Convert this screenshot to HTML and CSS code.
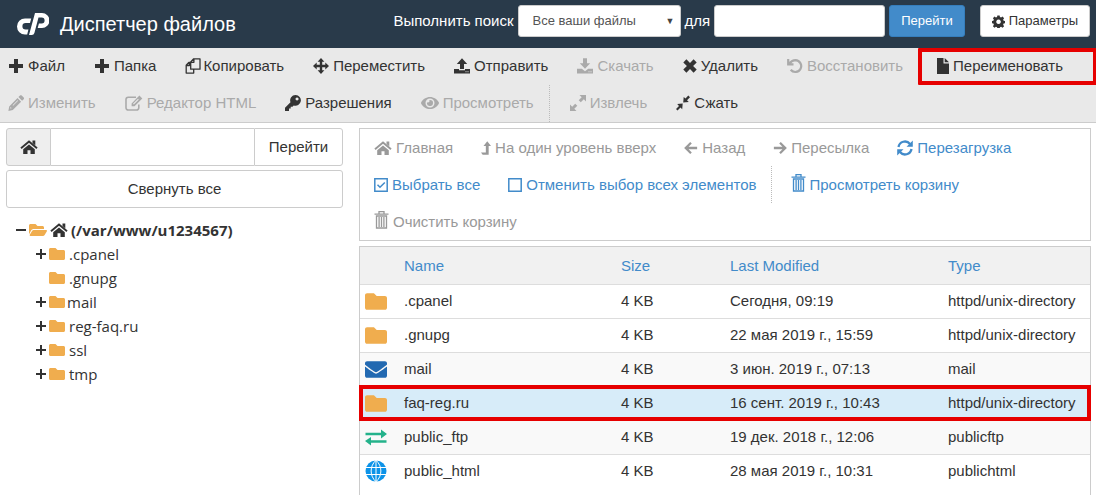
FILE: index.html
```html
<!DOCTYPE html>
<html lang="ru">
<head>
<meta charset="utf-8">
<meta name="viewport" content="width=device-width, initial-scale=1">
<title>Диспетчер файлов</title>
<link rel="stylesheet" href="styles.css">
</head>
<body>
<svg class="sprite" aria-hidden="true">
  <symbol id="plus" viewBox="0 0 16 16"><path d="M6 1h4v5h5v4h-5v5H6v-5H1V6h5z"/></symbol>
  <symbol id="copy" viewBox="0 0 16 16"><path d="M5.700 4 8.700.8h6.300v10.400H5.700zM5.700 4.300h3.200V.8M5.500 4.500H3.800L1.200 7.300v7.800h7.500v-3.600M1.200 7.500h3.200V4.700" fill="none" stroke="currentColor" stroke-width="1.300" stroke-linejoin="round"/></symbol>
  <symbol id="move" viewBox="0 0 16 16"><path d="M8 0l3.400 3.700H9.200v3.100h3.100V4.600L16 8l-3.700 3.400V9.200H9.200v3.100h2.200L8 16l-3.400-3.700h2.200V9.200H3.700v2.200L0 8l3.700-3.400v2.200h3.100V3.700H4.600z"/></symbol>
  <symbol id="upload" viewBox="0 0 16 16"><path d="M8 .2 13.200 6H10v5H6V6H2.800zM0 11h5v1.300h6V11h5v4.500H0zm11.500 2.200v1h1v-1zm2 0v1h1v-1z" fill-rule="evenodd"/></symbol>
  <symbol id="download" viewBox="0 0 16 16"><path d="M6 .2h4v5h3.200L8 10.800 2.800 5.200H6zM0 10.800h4.800L8 13.300l3.200-2.500H16v4.700H0zm11.500 2.400v1h1v-1zm2 0v1h1v-1z" fill-rule="evenodd"/></symbol>
  <symbol id="cross" viewBox="0 0 14 14"><path d="M3.400.3 7 3.900 10.600.3l3.100 3.100L10.100 7l3.600 3.600-3.100 3.100L7 10.100l-3.600 3.600-3.100-3.100L3.900 7 .3 3.400z"/></symbol>
  <symbol id="undo" viewBox="0 0 16 16"><path d="M1.200 1v5.300h5.300M2.200 5.800C4 3.500 6 2.200 8.500 2.200a5.900 5.900 0 1 1-4.800 9.600" fill="none" stroke="currentColor" stroke-width="2.200"/></symbol>
  <symbol id="file" viewBox="0 0 12 16"><path d="M0 0h6.500v5.500H12V16H0zM7.700 0 12 4.300H7.700z"/></symbol>
  <symbol id="pencil" viewBox="0 0 16 16"><path d="M12 .5c.6-.5 1.200-.4 1.700 0l2 2c.5.600.400 1.200 0 1.700l-1.600 1.600-3.700-3.700zM9.500 3.100l3.600 3.600-8.300 8.300-4.400.9.800-4.500zM2.600 12l-.5 1.600 1.600-.4zM9.600 5.200l-5 5 .5.500 5-5z" fill-rule="evenodd"/></symbol>
  <symbol id="edit" viewBox="0 0 18 16"><path d="M11 2.200H3.200A2.200 2.200 0 0 0 1 4.400v8.400A2.200 2.200 0 0 0 3.200 15h8.400a2.200 2.200 0 0 0 2.200-2.200V9.500" fill="none" stroke="currentColor" stroke-width="1.600"/><path d="M14.400.6 17.300 3.500 9.500 11.300H6.600V8.400zM13 3.800 8 8.800l.8.800 5-5z" fill-rule="evenodd"/></symbol>
  <symbol id="key" viewBox="0 0 16 16"><path d="M10.600 0a5.400 5.400 0 1 1-1.900 10.500L7.500 11.700H5.700v1.800H4V16H0v-3.200l5.500-5.500A5.400 5.400 0 0 1 10.600 0zm1.400 2.500a1.500 1.500 0 1 0 .1 0z" fill-rule="evenodd"/></symbol>
  <symbol id="eye" viewBox="0 0 576 512"><path d="M572.520 241.400C518.290 135.590 410.930 64 288 64S57.680 135.640 3.480 241.410a32.350 32.350 0 0 0 0 29.190C57.710 376.410 165.070 448 288 448s230.320-71.640 284.520-177.410a32.350 32.350 0 0 0 0-29.190zM288 400a144 144 0 1 1 144-144 143.930 143.930 0 0 1-144 144zm0-240a95.310 95.310 0 0 0-25.310 3.790 47.850 47.850 0 0 1-66.900 66.900A95.780 95.780 0 1 0 288 160z"/></symbol>
  <symbol id="expand" viewBox="0 0 16 16"><path d="M9.500 0H16v6.500l-2.200-2.200-3 3-2.100-2.100 3-3zM0 9.500l2.200 2.200 3-3 2.100 2.100-3 3L6.500 16H0z"/></symbol>
  <symbol id="compress" viewBox="0 0 14 16"><path d="M12.300.5 14 2.200l-3 3 1.800 1.800-5.600.5.500-5.600 1.800 1.600zM6.700 8.500l-.5 5.700-1.700-1.700-3 3L0 13.900l3-3L1.200 9.100z"/></symbol>
  <symbol id="gear" viewBox="0 0 16 16"><path d="M6.600.5h2.800l.4 2 1.400.6 1.700-1.200 2 2-1.200 1.700.6 1.400 2 .4v2.800l-2 .4-.6 1.400 1.200 1.700-2 2-1.700-1.200-1.400.6-.4 2H6.600l-.4-2-1.400-.6-1.700 1.200-2-2L2.300 12l-.6-1.400-2-.4V7.400l2-.4.600-1.400L1.100 3.900l2-2 1.700 1.200 1.400-.6zM8 5.600a2.800 2.800 0 1 0 .1 0z" fill-rule="evenodd"/></symbol>
  <symbol id="home" viewBox="0 0 18 16"><path d="M12.500 1.500h2.800v5l-2.800-2.500zM9 5.500l5.800 4.800V15h-4.300v-3.800h-3V15H3.200v-4.700z"/><path d="M1 9.300 9 2.500l8 6.800" fill="none" stroke="currentColor" stroke-width="1.900"/></symbol>
  <symbol id="levelup" viewBox="0 0 12 16"><path d="M7.500 0 12 5.500H9.200V16H2L0 13.300h5.800V5.500H3z"/></symbol>
  <symbol id="left" viewBox="0 0 16 16"><path d="M8 2 2 8l6 6M2.300 8H15" fill="none" stroke="currentColor" stroke-width="2.600"/></symbol>
  <symbol id="right" viewBox="0 0 16 16"><path d="M8 2l6 6-6 6M13.700 8H1" fill="none" stroke="currentColor" stroke-width="2.600"/></symbol>
  <symbol id="refresh" viewBox="0 0 16 16"><path d="M1.500 7A6.500 6.500 0 0 1 13 4M14.500 9A6.500 6.500 0 0 1 3 12" fill="none" stroke="currentColor" stroke-width="2.300"/><path d="M15.800.5v6.300H9.500zM.2 15.500V9.200h6.300z"/></symbol>
  <symbol id="checked" viewBox="0 0 14 14"><path d="M.8.8h12.400v12.400H.8zM3.500 6.800 6 9.300l4.800-4.800" fill="none" stroke="currentColor" stroke-width="1.500"/></symbol>
  <symbol id="unchecked" viewBox="0 0 14 14"><path d="M.8.8h12.400v12.400H.8z" fill="none" stroke="currentColor" stroke-width="1.500"/></symbol>
  <symbol id="trash" viewBox="0 0 14 18"><path d="M4.500 2.500V.7h5v1.800M0 3.200h14M2 5h10v12H2zM4.600 6v10M7 6v10M9.400 6v10" fill="none" stroke="currentColor" stroke-width="1.300"/></symbol>
  <symbol id="folder" viewBox="0 64 512 384"><path d="M464 128H272l-64-64H48C21.490 64 0 85.490 0 112v288c0 26.510 21.490 48 48 48h416c26.510 0 48-21.490 48-48V176c0-26.510-21.490-48-48-48z"/></symbol>
  <symbol id="folderopen" viewBox="0 64 576 384"><path d="M572.694 292.093L500.270 416.248A63.997 63.997 0 0 1 444.989 448H45.025c-18.523 0-30.064-20.093-20.731-36.093l72.424-124.155A64 64 0 0 1 152 256h399.964c18.523 0 30.064 20.093 20.730 36.093zM152 224h328v-48c0-26.510-21.490-48-48-48H272l-64-64H48C21.490 64 0 85.490 0 112v278.046l69.077-118.418C86.214 242.250 117.989 224 152 224z"/></symbol>
  <symbol id="envelope" viewBox="0 64 512 384"><path d="M502.300 190.800c3.900-3.100 9.700-.2 9.700 4.700V400c0 26.500-21.500 48-48 48H48c-26.500 0-48-21.500-48-48V195.600c0-5 5.700-7.800 9.700-4.700 22.400 17.400 52.100 39.500 154.100 113.600 21.100 15.400 56.700 47.800 92.200 47.600 35.700.3 72-32.800 92.300-47.600 102-74.100 131.600-96.300 154-113.700zM256 320c23.200.4 56.600-29.200 73.400-41.400 132.700-96.300 142.800-104.700 173.400-128.700 5.800-4.500 9.200-11.500 9.200-18.900v-19c0-26.500-21.500-48-48-48H48c-26.500 0-48 21.500-48 48v19c0 7.400 3.400 14.300 9.200 18.900 30.600 23.900 40.700 32.400 173.400 128.700 16.800 12.200 50.200 41.800 73.400 41.400z"/></symbol>
  <symbol id="exchange" viewBox="0 0 22 16"><path d="M.5 3.200h15.500V0L22 4.500 16 9V5.800H.5zM21.500 13.300H6V16l-6-4.500L6 7.500v3.200h15.500z"/></symbol>
  <symbol id="globe" viewBox="0 0 22 22"><circle cx="11" cy="11" r="10.500"/><path d="M0 7.500h22M0 14.500h22M11 0v22M11 .3C4.500 6 4.500 16 11 21.700M11 .3c6.500 5.700 6.500 15.700 0 21.400" fill="none" stroke="#fff" stroke-width="1"/></symbol>
  <symbol id="minus" viewBox="0 0 10 10"><path d="M0 4h10v2H0z"/></symbol>
  <symbol id="add" viewBox="0 0 10 10"><path d="M4 0h2v4h4v2H6v4H4V6H0V4h4z"/></symbol>
</svg>

<header class="header">
  <svg class="logo" viewBox="0 0 32 22" role="img" aria-label="cPanel"><path d="M14.200 5.500 13 10H8.700a3.200 3.200 0 0 0 0 6.600h2.700L10.200 21.500H8A8 8 0 0 1 8 5.500z" fill="#fff"/><path d="M18 0h7a7.500 7.500 0 0 1 0 15h-4.300l1.200-4.600h2.800a2.900 2.900 0 0 0 0-5.800h-3.200L17.400 20Q16.800 22 14.800 22H12z" fill="#fff"/></svg>
  <h1 class="title">Диспетчер файлов</h1>
  <form class="search">
    <label for="scope">Выполнить поиск</label>
    <span class="select-wrap">
      <select id="scope" class="field scope"><option>Все ваши файлы</option></select>
      <span class="caret" aria-hidden="true">▼</span>
    </span>
    <label for="query">для</label>
    <input id="query" class="field query" type="text">
    <button class="btn btn-primary" type="button">Перейти</button>
    <button class="btn btn-settings" type="button"><svg class="ico i13"><use href="#gear"/></svg>Параметры</button>
  </form>
</header>

<nav class="toolbar" aria-label="Действия">
  <button class="tool"><svg class="ico i16"><use href="#plus"/></svg>Файл</button>
  <button class="tool"><svg class="ico i16"><use href="#plus"/></svg>Папка</button>
  <button class="tool tight"><svg class="ico i16"><use href="#copy"/></svg>Копировать</button>
  <button class="tool"><svg class="ico i16"><use href="#move"/></svg>Переместить</button>
  <button class="tool"><svg class="ico i16"><use href="#upload"/></svg>Отправить</button>
  <button class="tool" disabled><svg class="ico i16"><use href="#download"/></svg>Скачать</button>
  <button class="tool"><svg class="ico i14"><use href="#cross"/></svg>Удалить</button>
  <button class="tool" disabled><svg class="ico i16"><use href="#undo"/></svg>Восстановить</button>
  <button class="tool marked"><svg class="ico i12"><use href="#file"/></svg>Переименовать</button>
  <button class="tool" disabled><svg class="ico i16"><use href="#pencil"/></svg>Изменить</button>
  <button class="tool" disabled><svg class="ico i18"><use href="#edit"/></svg>Редактор HTML</button>
  <button class="tool"><svg class="ico i16"><use href="#key"/></svg>Разрешения</button>
  <button class="tool" disabled><svg class="ico i18"><use href="#eye"/></svg>Просмотреть</button>
  <span class="sep"></span>
  <button class="tool" disabled><svg class="ico i16"><use href="#expand"/></svg>Извлечь</button>
  <button class="tool"><svg class="ico i14"><use href="#compress"/></svg>Сжать</button>
</nav>

<main class="main">
  <aside class="side">
    <form class="path">
      <label class="addon" for="path"><svg class="ico i18" role="img" aria-label="Путь"><use href="#home"/></svg></label>
      <input id="path" class="path-input" type="text">
      <button class="path-go" type="button">Перейти</button>
    </form>
    <button class="collapse" type="button">Свернуть все</button>
    <ul class="tree">
      <li class="root"><svg class="sign"><use href="#minus"/></svg><svg class="fold open"><use href="#folderopen"/></svg><svg class="ico i18"><use href="#home"/></svg>(/var/www/u1234567)</li>
      <li class="node"><svg class="sign"><use href="#add"/></svg><svg class="fold"><use href="#folder"/></svg>.cpanel</li>
      <li class="node"><span class="sign"></span><svg class="fold"><use href="#folder"/></svg>.gnupg</li>
      <li class="node near"><svg class="sign"><use href="#add"/></svg><svg class="fold"><use href="#folder"/></svg>mail</li>
      <li class="node"><svg class="sign"><use href="#add"/></svg><svg class="fold"><use href="#folder"/></svg>reg-faq.ru</li>
      <li class="node"><svg class="sign"><use href="#add"/></svg><svg class="fold"><use href="#folder"/></svg>ssl</li>
      <li class="node"><svg class="sign"><use href="#add"/></svg><svg class="fold"><use href="#folder"/></svg>tmp</li>
    </ul>
  </aside>

  <section class="content">
    <nav class="actions" aria-label="Навигация">
      <button class="tool" disabled><svg class="ico i18"><use href="#home"/></svg>Главная</button>
      <button class="tool" disabled><svg class="ico i10"><use href="#levelup"/></svg>На один уровень вверх</button>
      <button class="tool" disabled><svg class="ico i14"><use href="#left"/></svg>Назад</button>
      <button class="tool" disabled><svg class="ico i14"><use href="#right"/></svg>Пересылка</button>
      <button class="tool"><svg class="ico i16"><use href="#refresh"/></svg>Перезагрузка</button>
      <button class="tool"><svg class="ico i14"><use href="#checked"/></svg>Выбрать все</button>
      <button class="tool"><svg class="ico i14"><use href="#unchecked"/></svg>Отменить выбор всех элементов</button>
      <span class="sep"></span>
      <button class="tool"><svg class="ico bin"><use href="#trash"/></svg>Просмотреть корзину</button>
      <button class="tool" disabled><svg class="ico bin"><use href="#trash"/></svg>Очистить корзину</button>
    </nav>
    <div class="files">
      <table class="table">
        <colgroup><col class="c-icon"><col class="c-name"><col class="c-size"><col class="c-date"><col></colgroup>
        <thead><tr><th></th><th><a href="#">Name</a></th><th><a href="#">Size</a></th><th><a href="#">Last Modified</a></th><th><a href="#">Type</a></th></tr></thead>
        <tbody>
          <tr><td><svg class="kind dir"><use href="#folder"/></svg></td><td>.cpanel</td><td>4 KB</td><td>Сегодня, 09:19</td><td>httpd/unix-directory</td></tr>
          <tr><td><svg class="kind dir"><use href="#folder"/></svg></td><td>.gnupg</td><td>4 KB</td><td>22 мая 2019 г., 15:59</td><td>httpd/unix-directory</td></tr>
          <tr class="alt"><td><svg class="kind mail"><use href="#envelope"/></svg></td><td>mail</td><td>4 KB</td><td>3 июн. 2019 г., 07:13</td><td>mail</td></tr>
          <tr class="selected"><td><svg class="kind dir"><use href="#folder"/></svg></td><td>faq-reg.ru</td><td>4 KB</td><td>16 сент. 2019 г., 10:43</td><td>httpd/unix-directory</td></tr>
          <tr class="alt"><td><svg class="kind ftp"><use href="#exchange"/></svg></td><td>public_ftp</td><td>4 KB</td><td>19 дек. 2018 г., 12:06</td><td>publicftp</td></tr>
          <tr><td><svg class="kind web"><use href="#globe"/></svg></td><td>public_html</td><td>4 KB</td><td>28 мая 2019 г., 10:31</td><td>publichtml</td></tr>
        </tbody>
      </table>
    </div>
  </section>
</main>
</body>
</html>
```
FILE: styles.css
```css
* { box-sizing: border-box; }

body {
  margin: 0 4px 0 0;
  min-height: 100vh;
  display: flex;
  flex-direction: column;
  background: #fff;
  color: #333;
  font: 15px/20px "Liberation Sans", Arial, sans-serif;
}

button, input, select { font: inherit; color: inherit; margin: 0; }
button { cursor: pointer; }
.sprite { display: none; }
.ico { flex: none; height: 16px; fill: currentColor; }
.i10 { width: 10px; }
.i12 { width: 12px; }
.i13 { width: 13px; height: 13px; }
.i14 { width: 14px; }
.i16 { width: 16px; }
.i18 { width: 18px; }
.bin { width: 15px; height: 18px; margin-top: -4px; }

/* Header */
.header {
  display: flex;
  align-items: center;
  height: 48px;
  padding: 0 6px 0 17px;
  background: #293a4a;
  color: #fff;
}
.logo { width: 32px; height: 22px; }
.title { margin: 0 0 0 11px; font-size: 20px; font-weight: 400; line-height: 24px; }
.search {
  display: flex;
  align-items: center;
  gap: 4px;
  height: 32px;
  margin: 0 0 6px auto;
}
.search label { font-size: 15px; }
.field {
  height: 32px;
  border: 1px solid #ccc;
  border-radius: 3px;
  background: #fff;
  color: #555;
  font-size: 13px;
}
.select-wrap { position: relative; }
.scope { width: 163px; padding: 0 14px; appearance: none; }
.caret {
  position: absolute;
  top: 6px;
  right: 6px;
  color: #444;
  font-size: 9px;
  pointer-events: none;
}
.query { width: 171px; padding: 0 8px; }
.btn {
  display: flex;
  align-items: center;
  gap: 4px;
  height: 32px;
  padding: 0 11px;
  border: 1px solid #357ebd;
  border-radius: 3px;
  font-size: 13px;
}
.btn-primary { background: #428bca; color: #fff; }
.btn-settings { margin-left: 11px; border-color: #ccc; background: #fff; color: #333; }

/* Toolbars */
.toolbar, .actions { display: flex; flex-wrap: wrap; }
.toolbar {
  column-gap: 29px;
  padding-left: 8px;
  border-bottom: 1px solid #ccc;
  background: #e9e9e9;
}
.tool {
  display: flex;
  align-items: center;
  gap: 4px;
  height: 37px;
  padding: 0;
  border: 0;
  background: none;
  white-space: nowrap;
}
.toolbar .tool { padding-bottom: 1px; }
.tool:disabled { color: #aaa; }
.tight { gap: 2px; }
.toolbar .marked {
  flex: 1;
  margin: 0 -1px 0 -14px;
  padding-left: 15px;
  border: 4px solid #e60000;
  border-radius: 1px;
}
.sep { margin: 0 -9px 0 -14px; border-left: 1px dotted #bbb; }

/* Main area */
.main { flex: 1; display: flex; gap: 16px; padding: 5px 5px 0 6px; }
.side { flex: none; width: 337px; }
.path { display: flex; height: 38px; margin-bottom: 4px; }
.addon {
  display: flex;
  align-items: center;
  justify-content: center;
  width: 45px;
  border: 1px solid #ccc;
  border-radius: 3px 0 0 3px;
  background: #eee;
}
.path-input {
  flex: 1;
  min-width: 0;
  padding: 0 8px;
  border: 1px solid #ccc;
  border-width: 1px 0;
}
.path-go {
  width: 89px;
  border: 1px solid #ccc;
  border-radius: 0 3px 3px 0;
  background: #fff;
}
.collapse {
  width: 100%;
  height: 38px;
  border: 1px solid #ccc;
  border-radius: 3px;
  background: #fff;
}
.tree {
  margin: 10px 0 0;
  padding: 0 0 0 10px;
  list-style: none;
  font-family: "Open Sans", sans-serif;
  line-height: 24px;
}
.tree li { display: flex; align-items: center; height: 24px; }
.root { gap: 3px; font-weight: 700; }
.root .sign { margin-right: 0; }
.node { padding-left: 20px; }
.tree .sign { flex: none; width: 10px; height: 10px; fill: #333; }
.fold { flex: none; width: 16px; height: 12px; margin: 0 4px 0 3px; fill: #f0ad4e; }
.open { width: 18px; margin: 0; }
.near .fold { margin-right: 2px; }

.content { flex: 1; min-width: 0; display: flex; flex-direction: column; }
.actions {
  column-gap: 28px;
  padding: 0 14px;
  border: 1px solid #ccc;
  color: #428bca;
}
.actions .tool:disabled { color: #999; }

/* File list */
.files { flex: 1; margin-top: 5px; border: 1px solid #ccc; border-bottom: 0; }
.table { width: 100%; border-collapse: collapse; table-layout: fixed; }
.c-icon { width: 36px; }
.c-name { width: 217px; }
.c-size { width: 109px; }
.c-date { width: 218px; }
.table th, .table td {
  height: 34px;
  padding: 0 0 0 8px;
  border-bottom: 1px solid #ddd;
  text-align: left;
  font-weight: 400;
  white-space: nowrap;
}
.table th { height: 37px; padding-top: 2px; background: #f1f1f1; }
.table a { color: #428bca; text-decoration: none; }
.table td:first-child { padding-left: 5px; }
.table tbody tr:last-child td { border-bottom: 0; }
.alt { background: #f9f9f9; }
.selected { background: #d7ecf9; outline: 4px solid #e60000; outline-offset: -3px; }
.kind { display: block; width: 22px; height: 17px; }
.dir { fill: #f0ad4e; }
.mail { fill: #2269b1; }
.ftp { fill: #24b28b; }
.web { height: 22px; fill: #0d93e8; }
```
